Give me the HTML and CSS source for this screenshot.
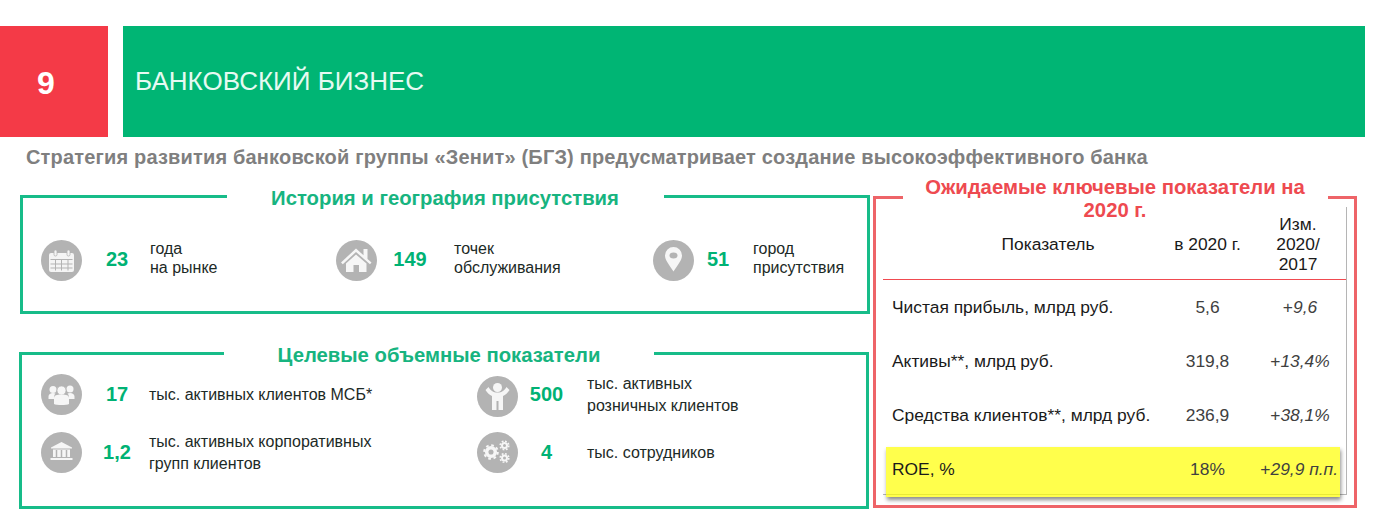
FILE: index.html
```html
<!DOCTYPE html>
<html lang="ru">
<head>
    <meta charset="UTF-8">
    <title>Банковский бизнес</title>
    <link rel="stylesheet" href="styles.css">
</head>
<body>
    <div class="header">
        <div class="header-num">9</div>
        <div class="header-title">БАНКОВСКИЙ БИЗНЕС</div>
    </div>
    <div class="subtitle">Стратегия развития банковской группы «Зенит» (БГЗ) предусматривает создание высокоэффективного банка</div>

    <div class="content">
        <div class="left">
            <div class="box box-history">
                <div class="box-title">История и география присутствия</div>
                <div class="history-grid">
                    <svg class="icon" viewBox="0 0 41 41">
                        <circle cx="20.5" cy="20.5" r="20.5" fill="#b3b3b3"/>
                        <rect x="8" y="13" width="25" height="19" rx="2" fill="#f4f4f4"/>
                        <rect x="13" y="10" width="3" height="6" rx="1.4" fill="#f4f4f4" stroke="#b3b3b3" stroke-width=".8"/>
                        <rect x="26" y="10" width="3" height="6" rx="1.4" fill="#f4f4f4" stroke="#b3b3b3" stroke-width=".8"/>
                        <path d="M9.500 19.500h22M9.500 24h22M9.500 28h22M14.500 19.500v11M20.500 19.500v11M27 19.500v11" stroke="#b3b3b3" fill="none"/>
                    </svg>
                    <div class="num num-a">23</div>
                    <div class="text">года<br>на рынке</div>
                    <svg class="icon" viewBox="0 0 41 41">
                        <circle cx="20.5" cy="20.5" r="20.5" fill="#b3b3b3"/>
                        <path d="M20 8.500 5 22.500l1.800 1.800L20 12l14 12.300 1.500-1.800-4-3.600V9h-4v6.300z" fill="#f6f6f6"/>
                        <path d="M20 14.500 10 23.500V32h7.500v-7H23v7h7.500v-8.500z" fill="#f6f6f6"/>
                    </svg>
                    <div class="num">149</div>
                    <div class="text text-gap">точек<br>обслуживания</div>
                    <svg class="icon" viewBox="0 0 41 41">
                        <circle cx="20.5" cy="20.5" r="20.5" fill="#b3b3b3"/>
                        <path d="M20.5 31.5C16 24.5 12 20 12 15.5a8.500 8.500 0 0 1 17 0c0 4.500-4 9-8.500 16z" fill="#f6f6f6"/>
                        <ellipse cx="20.5" cy="15.500" rx="4" ry="3" fill="#b3b3b3"/>
                    </svg>
                    <div class="num">51</div>
                    <div class="text text-gap">город<br>присутствия</div>
                </div>
            </div>

            <div class="box box-target">
                <div class="box-title">Целевые объемные показатели</div>
                <div class="target-grid">
                    <svg class="icon" viewBox="0 0 41 41">
                        <circle cx="20.5" cy="20.5" r="20.500" fill="#b3b3b3"/>
                        <circle cx="12" cy="15.500" r="3.500" fill="#f6f6f6"/>
                        <circle cx="29" cy="15" r="3.500" fill="#f6f6f6"/>
                        <circle cx="20.500" cy="16.500" r="4.500" fill="#f6f6f6" stroke="#b3b3b3" stroke-width=".7"/>
                        <path d="M7.500 25v-2.500c0-2 2-3.500 4.500-3.500 1 0 1.800.2 2.500.5-1 1-1.500 2.500-1.500 5.500zM33.500 25v-2.500c0-2-2-3.500-4.500-3.500-1 0-1.800.2-2.500.5 1 1 1.500 2.500 1.500 5.500z" fill="#f6f6f6"/>
                        <path d="M13 30v-6c0-2.500 2.500-3.500 7.500-3.500S28 21.500 28 24v6c-2 1.300-13 1.300-15 0z" fill="#f6f6f6"/>
                    </svg>
                    <div class="num num-d">17</div>
                    <div class="text text-wide">тыс. активных клиентов МСБ*</div>
                    <svg class="icon icon-low" viewBox="0 0 41 41">
                        <circle cx="20.500" cy="20.500" r="20.500" fill="#b3b3b3"/>
                        <circle cx="20.500" cy="11.500" r="4.500" fill="#f6f6f6"/>
                        <path d="M8.500 14 11.500 11c2 3.500 4.500 5.500 9 5.500s7-2 9-5.500l3 3c-1.800 3-4 5-6.500 6v14h-4.500v-9h-2v9H15V20c-2.500-1-4.700-3-6.500-6z" fill="#f6f6f6"/>
                    </svg>
                    <div class="num num-e">500</div>
                    <div class="text text-wide">тыс. активных<br>розничных клиентов</div>
                    <svg class="icon" viewBox="0 0 41 41">
                        <circle cx="20.500" cy="20.500" r="20.500" fill="#b3b3b3"/>
                        <path d="M20.500 10 31 15.500v1H10v-1z" fill="#f6f6f6"/>
                        <path d="M12 17.500h17V25H12z" fill="#f6f6f6"/>
                        <path d="M15.500 18v7M20.500 18v7M25.500 18v7" stroke="#b3b3b3" stroke-width="1.500" fill="none"/>
                        <path d="M9.500 26h22v2h-22z" fill="#f6f6f6"/>
                    </svg>
                    <div class="num num-d">1,2</div>
                    <div class="text text-wide">тыс. активных корпоративных<br>групп клиентов</div>
                    <svg class="icon" viewBox="0 0 41 41">
                        <circle cx="20.500" cy="20.500" r="20.500" fill="#b3b3b3"/>
                        <circle cx="14" cy="20" r="4.300" fill="none" stroke="#f6f6f6" stroke-width="3.500"/>
                        <circle cx="14" cy="20" r="6.800" fill="none" stroke="#f6f6f6" stroke-width="2" stroke-dasharray="2.700 2.640"/>
                        <circle cx="27.500" cy="13.500" r="2.500" fill="none" stroke="#f6f6f6" stroke-width="2"/>
                        <circle cx="27.500" cy="13.500" r="4.300" fill="none" stroke="#f6f6f6" stroke-width="1.600" stroke-dasharray="1.800 1.580"/>
                        <circle cx="27.500" cy="26" r="2.500" fill="none" stroke="#f6f6f6" stroke-width="2"/>
                        <circle cx="27.500" cy="26" r="4.300" fill="none" stroke="#f6f6f6" stroke-width="1.600" stroke-dasharray="1.800 1.580"/>
                    </svg>
                    <div class="num num-e">4</div>
                    <div class="text text-wide">тыс. сотрудников</div>
                </div>
            </div>
        </div>

        <div class="box box-red">
            <div class="box-title">Ожидаемые ключевые показатели на</div>
            <div class="box-title title-year">2020 г.</div>
            <div class="kpi">
                <div class="kpi-row kpi-head">
                    <div class="kpi-name">Показатель</div>
                    <div class="kpi-val">в 2020 г.</div>
                    <div class="kpi-val">Изм.<br>2020/<br>2017</div>
                </div>
                <div class="kpi-row">
                    <div class="kpi-label">Чистая прибыль, млрд руб.</div>
                    <div class="kpi-val">5,6</div>
                    <div class="kpi-val kpi-change">+<i>9,6</i></div>
                </div>
                <div class="kpi-row">
                    <div class="kpi-label">Активы**, млрд руб.</div>
                    <div class="kpi-val">319,8</div>
                    <div class="kpi-val kpi-change">+<i>13,4%</i></div>
                </div>
                <div class="kpi-row">
                    <div class="kpi-label">Средства клиентов**, млрд руб.</div>
                    <div class="kpi-val">236,9</div>
                    <div class="kpi-val kpi-change">+<i>38,1%</i></div>
                </div>
                <div class="kpi-row kpi-mark">
                    <div class="kpi-label">ROE, %</div>
                    <div class="kpi-val">18%</div>
                    <div class="kpi-val kpi-change">+<i>29,9 п.п.</i></div>
                </div>
            </div>
        </div>
    </div>
</body>
</html>
```
FILE: styles.css
```css
body {
    margin: 0;
    padding-top: 26px;
    background-color: #ffffff;
    color: #1a1a1a;
    font-family: "Liberation Sans", Arial, sans-serif;
}
.header {
    display: flex;
    gap: 15px;
    height: 111px;
    margin-right: 8px;
}
.header-num {
    width: 92px;
    padding: 3px 16px 0 0;
    background-color: #f43a47;
    color: #ffffff;
    font-size: 32px;
    font-weight: bold;
    display: flex;
    align-items: center;
    justify-content: center;
}
.header-title {
    flex: 1;
    padding-left: 12px;
    background-color: #00b574;
    color: #e6faf2;
    font-size: 26px;
    display: flex;
    align-items: center;
}
.subtitle {
    margin: 10px 0 0 26px;
    color: #7f7f7f;
    font-size: 20px;
    font-weight: bold;
    letter-spacing: 0.17px;
    line-height: 21px;
}
.content {
    display: flex;
    gap: 3px;
    margin: 27px 0 0 20px;
}
.left {
    width: 850px;
}
.box {
    box-sizing: border-box;
    border: 3px solid #17bc89;
}
.box-title {
    position: relative;
    margin: -12px auto 0;
    background-color: #ffffff;
    color: #17b480;
    font-size: 20.3px;
    font-weight: bold;
    line-height: 24px;
    text-align: center;
}
.box-history {
    height: 119px;
}
.box-history .box-title {
    width: 437px;
}
.box-target {
    width: 850px;
    height: 157px;
    margin: 38px 0 0 -1px;
}
.box-target .box-title {
    width: 430px;
    margin-left: 202px;
}
.box-red {
    width: 484px;
    height: 312px;
    margin-top: 1px;
    border-color: #ee6468;
}
.box-red .box-title {
    width: 425px;
    margin-top: -23px;
    color: #ee4a50;
    line-height: 23px;
}
.box-red .title-year {
    width: fit-content;
    margin-top: 0;
}
.history-grid {
    display: grid;
    grid-template-columns: 41px 68px 186px 41px 66px 210px 41px 48px 1fr;
    align-items: center;
    margin: 29px 0 0 18px;
}
.target-grid {
    display: grid;
    grid-template-columns: 41px 67px 328px 41px 69px 1fr;
    grid-auto-rows: 41px;
    row-gap: 17px;
    align-items: center;
    margin: 7px 0 0 19px;
}
.icon {
    display: block;
    width: 41px;
    height: 41px;
}
.icon-low {
    margin-top: 4px;
}
.num {
    color: #00b274;
    font-size: 20px;
    font-weight: bold;
    text-align: center;
}
.history-grid .num {
    margin-bottom: 3px;
}
.num-a {
    padding-left: 2px;
}
.num-d {
    padding-left: 3px;
}
.num-e {
    padding-right: 12px;
}
.text {
    color: #1c2a26;
    font-size: 16px;
    line-height: 19px;
    margin-bottom: 5px;
}
.text-gap {
    padding-left: 11px;
}
.text-wide {
    line-height: 22px;
    margin-bottom: 0;
    white-space: nowrap;
}
.kpi {
    position: relative;
    box-sizing: border-box;
    width: 464px;
    height: 288px;
    margin: -15px 0 0 7px;
    border-right: 1px solid #b5b5b5;
    border-bottom: 1px solid #b5b5b5;
    color: #1a1a1a;
    font-size: 17.4px;
}
.kpi-row {
    display: grid;
    grid-template-columns: 282px 85px 1fr;
    align-items: center;
    height: 54px;
}
.kpi-head {
    height: 73px;
    box-sizing: border-box;
    padding-top: 2px;
    border-bottom: 1px solid #f04a50;
    line-height: 20px;
}
.kpi-name {
    padding-left: 48px;
    text-align: center;
}
.kpi-label {
    padding-left: 9px;
    white-space: nowrap;
}
.kpi-val {
    text-align: center;
    white-space: nowrap;
}
.kpi-change {
    padding-left: 4px;
}
.kpi-row:not(.kpi-head) .kpi-val {
    color: #404040;
}
.kpi-mark {
    position: relative;
    grid-template-columns: 279px 85px 90px;
    box-sizing: border-box;
    width: 454px;
    height: 50px;
    margin: 5px 0 0 3px;
    padding-bottom: 6px;
    background-color: rgba(255, 255, 0, 0.7);
    box-shadow: 1px 3px 4px rgba(0, 0, 0, 0.45);
}
.kpi-mark .kpi-label {
    padding-left: 6px;
}
.kpi-mark .kpi-change {
    padding: 0 2px 0 0;
    text-align: right;
}
```
